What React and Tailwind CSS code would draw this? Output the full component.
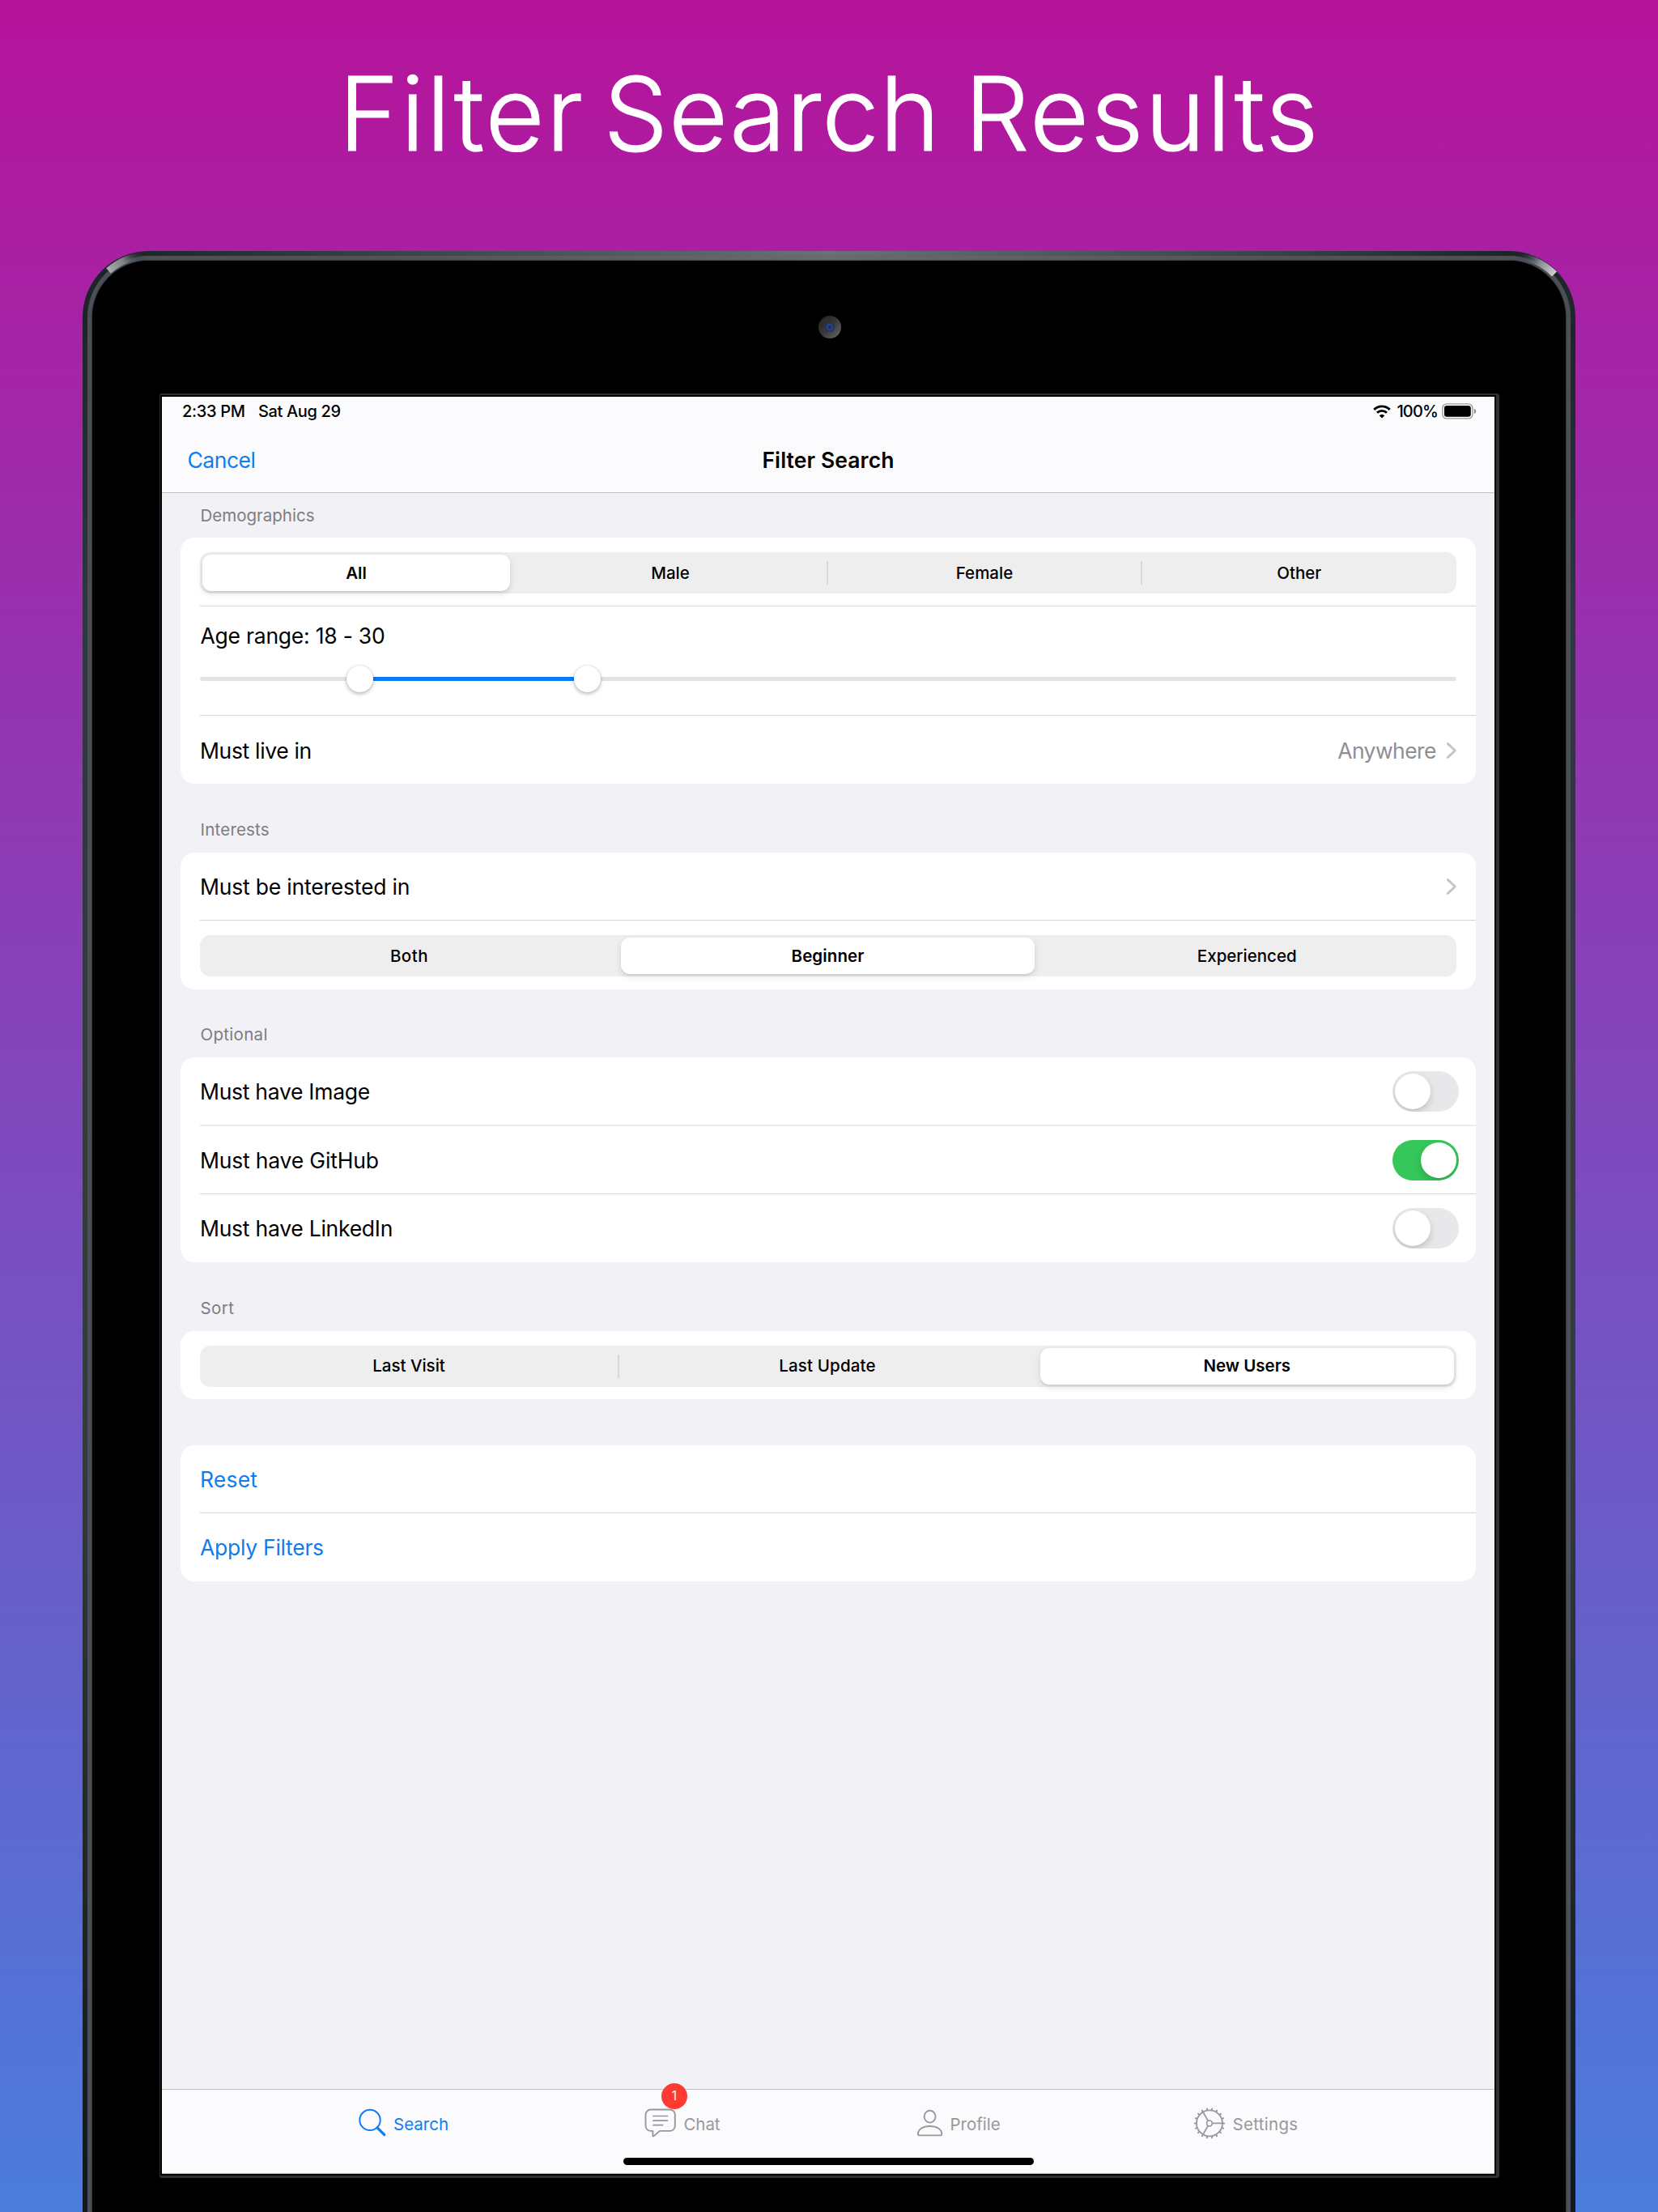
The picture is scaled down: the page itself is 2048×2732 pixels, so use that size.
import React from "react";

function Device({ children }) {
  return (
    <div className="relative ml-[102px] w-[1844px] h-[2560px] rounded-[82px] bg-[linear-gradient(to_right,#1b2328_0%,#20282c_5%,#3a4247_20%,#6b7175_50%,#3a4247_80%,#1b2328_96%,#1f272d_100%)] p-[6px]">
      <div className="absolute inset-x-0 bottom-0 top-[90px] bg-[linear-gradient(to_bottom,#1d252a,#30383d_15%,#353c41_55%,#121a1f_92%)]" />
      <div className="relative h-full rounded-[76px] bg-[linear-gradient(to_right,#4a5056_0%,#4e545a_20%,#656c72_50%,#4e545a_80%,#4a5056_100%)] p-[6px] shadow-[0_0_1px_0px_#3a4146]">
        <div className="h-full rounded-[70px] bg-black shadow-[0_0_2px_0px_#000000] pl-[83px] pt-[164px]">{children}</div>
      </div>
      <svg className="absolute left-0 top-0" width="1844" height="100" viewBox="0 0 1844 100" fill="none">
        <defs>
          <linearGradient id="glintL" gradientUnits="userSpaceOnUse" x1="32" y1="24" x2="76" y2="4">
            <stop offset="0" stopColor="#a9adb0" />
            <stop offset="0.45" stopColor="#7b8083" />
            <stop offset="1" stopColor="#20282c" stopOpacity="0" />
          </linearGradient>
          <linearGradient id="glintR" gradientUnits="userSpaceOnUse" x1="1819" y1="30" x2="1772" y2="4">
            <stop offset="0" stopColor="#d2d4d6" />
            <stop offset="0.45" stopColor="#868b8e" />
            <stop offset="1" stopColor="#20282c" stopOpacity="0" />
          </linearGradient>
        </defs>
        <path d="M32 24.5A76.5 76.5 0 0 1 80 5.5" stroke="url(#glintL)" strokeWidth="8.5" />
        <path d="M1818 28.5A76.5 76.5 0 0 0 1764 5.5" stroke="url(#glintR)" strokeWidth="8.5" />
      </svg>
      <div className="absolute left-[909px] top-[80px] size-[28px] rounded-full bg-[linear-gradient(135deg,#262626_10%,#383838_50%,#666666_95%)] p-[8px]">
        <div className="size-[12px] rounded-full bg-[radial-gradient(circle,#16264f_0%,#2a4587_40%,#1b2440_75%,#2a2b30_100%)]" />
      </div>
    </div>
  );
}

function Wifi() {
  return (
    <svg width="22" height="17" viewBox="0 0 22 17" fill="none" stroke="#000" strokeWidth="2.9">
      <path d="M1.3 5.9A13.8 13.8 0 0 1 20.7 5.9" />
      <path d="M5 9.8A8.6 8.6 0 0 1 17 9.8" />
      <path d="M11 16.6L7.7 13.2A4.8 4.8 0 0 1 14.3 13.2Z" fill="#000" stroke="none" />
    </svg>
  );
}

function Battery() {
  return (
    <svg width="43" height="20" viewBox="0 0 43 20">
      <rect x="0.9" y="0.9" width="37" height="18" rx="5" fill="none" stroke="#9c9c9f" strokeWidth="1.4" />
      <rect x="3" y="3" width="32.8" height="13.8" rx="3.2" fill="#000" />
      <path d="M39.8 6.7c1.6.5 2.4 1.7 2.4 3.2s-.8 2.7-2.4 3.2z" fill="#8e8e92" />
    </svg>
  );
}

function SectionTitle({ children, className = "" }) {
  return (
    <div className={"h-[55px] pl-[47.5px] text-[20.5px] leading-[55px] text-[#7d7d82] " + className}>{children}</div>
  );
}

function Card({ children, className = "" }) {
  return <div className={"mx-[23px] rounded-[17px] bg-white pl-[24px] " + className}>{children}</div>;
}

function Row({ children, className }) {
  return <div className={"flex items-center border-[#d6d6d8] text-[26.5px] leading-8 " + className}>{children}</div>;
}

function Segmented({ items, selected, columns }) {
  return (
    <div className={"mr-[24.5px] grid h-[51px] flex-1 rounded-[13px] bg-[#eeeeee] p-[3px] text-[20.5px] font-medium " + columns}>
      {items.map((item, i) => {
        const on = i === selected;
        const divided = i > 0 && !on && i - 1 !== selected;
        return (
          <div
            key={item.label}
            className={
              "relative flex items-center justify-center " +
              (on ? "rounded-[11px] bg-white font-semibold shadow-[0_3px_8px_rgba(0,0,0,0.12),0_2px_2px_rgba(0,0,0,0.05)] " : "") +
              (item.className || "")
            }
          >
            {divided && <span className="absolute left-[-1px] top-[8px] h-[29px] w-[1.5px] bg-[#d8d8da]" />}
            {item.label}
          </div>
        );
      })}
    </div>
  );
}

function Chevron() {
  return (
    <svg className="mr-[23px]" width="14" height="22" viewBox="0 0 14 22" fill="none" stroke="#c4c4c7" strokeWidth="2.9" strokeLinecap="round" strokeLinejoin="round">
      <path d="M2.4 2.6L11.4 11L2.4 19.4" />
    </svg>
  );
}

function Toggle({ on }) {
  return (
    <div className={"mr-[21px] flex h-[50px] w-[82px] overflow-hidden rounded-full p-[3px] " + (on ? "justify-end bg-[#35c759]" : "bg-[#e8e8ea]")}>
      <div className="size-[44px] rounded-full bg-white shadow-[0_4px_10px_rgba(0,0,0,0.16),0_1px_1px_rgba(0,0,0,0.06)]" />
    </div>
  );
}

function Slider() {
  return (
    <div className="mr-[24.5px] flex h-[34px] items-center">
      <div className="h-[5px] w-[181px] rounded-l-full bg-[#e3e3e3]" />
      <div className="relative z-10 size-[33px] rounded-full bg-white shadow-[0_2px_5px_rgba(0,0,0,0.28),0_0_1px_rgba(0,0,0,0.25)]" />
      <div className="h-[5px] w-[248px] bg-[#0a7bf6]" />
      <div className="relative z-10 size-[33px] rounded-full bg-white shadow-[0_2px_5px_rgba(0,0,0,0.28),0_0_1px_rgba(0,0,0,0.25)]" />
      <div className="h-[5px] flex-1 rounded-r-full bg-[#e3e3e3]" />
    </div>
  );
}

function SearchIcon() {
  return (
    <svg width="36" height="40" viewBox="0 0 36 40" fill="none" stroke="currentColor">
      <circle cx="14" cy="16.4" r="12.7" strokeWidth="2" />
      <path d="M23 25.8L31.8 34.6" strokeWidth="3.2" strokeLinecap="round" />
    </svg>
  );
}

function ChatIcon() {
  return (
    <svg width="40" height="40" viewBox="0 0 40 40" fill="none" stroke="currentColor" strokeWidth="1.9" strokeLinejoin="round" strokeLinecap="round">
      <path d="M7.8 3.5H31.5A6.3 6.3 0 0 1 37.8 9.8V23.6A6.3 6.3 0 0 1 31.5 29.9H18.8L12.4 35.6Q10.4 37.4 10.4 35.6V29.9H7.8A6.3 6.3 0 0 1 1.5 23.6V9.8A6.3 6.3 0 0 1 7.8 3.5Z" />
      <path d="M10.9 11.5H28.5M10.9 17.2H28.5M10.9 22.7H22.5" strokeWidth="1.7" />
    </svg>
  );
}

function ProfileIcon() {
  return (
    <svg width="34" height="40" viewBox="0 0 34 40" fill="none" stroke="currentColor" strokeWidth="1.9">
      <ellipse cx="16.6" cy="12.2" rx="6.9" ry="7.4" />
      <path d="M1.9 33.2C2.4 27.6 8.2 24 16.6 24S30.8 27.6 31.3 33.2Q31.4 35.4 29.4 35.4H3.8Q1.8 35.4 1.9 33.2Z" />
    </svg>
  );
}

function GearIcon() {
  const teeth = Array.from({ length: 18 }, (_, i) => i * 20);
  return (
    <svg width="40" height="40" viewBox="0 0 40 40" fill="none" stroke="currentColor">
      <circle cx="20" cy="20.4" r="16" strokeWidth="1.8" />
      <circle cx="20" cy="20.4" r="3.4" strokeWidth="1.7" />
      {teeth.map((a) => (
        <path key={a} d="M36.6 20.4H38.2" strokeWidth="2" strokeLinecap="round" transform={"rotate(" + a + " 20 20.4)"} />
      ))}
      {[0, 120, 240].map((a) => (
        <path key={a} d="M23.4 20.4H36" strokeWidth="1.7" transform={"rotate(" + a + " 20 20.4)"} />
      ))}
    </svg>
  );
}

function Tab({ icon, label, className = "", labelClass, badge }) {
  return (
    <div className={"relative flex h-[41px] text-[20.5px] " + className}>
      {icon}
      <span className={"pt-[2px] leading-[40px] " + labelClass}>{label}</span>
      {badge && (
        <span className="absolute left-[21px] top-[-29px] flex size-[32px] items-center justify-center rounded-full bg-[#ff3a30] text-[15.5px] leading-none text-white">
          {badge}
        </span>
      )}
    </div>
  );
}

export default function App() {
  return (
    <div className="h-[2732px] w-[2048px] overflow-hidden bg-[linear-gradient(to_bottom,#b6139b,#4a7cdc)] font-['Inter','Liberation_Sans',sans-serif] text-black">
      <h1 className="flex h-[310px] pl-[418.5px] pt-[60px] text-[126px] font-light leading-[160px] text-white [-webkit-text-stroke:1.2px_white]">
        <span className="w-[327px] tracking-[2.3px]">Filter</span>
        <span className="w-[446px] tracking-[0.9px]">Search</span>
        <span className="tracking-[2.2px]">Results</span>
      </h1>

      <Device>
        <div className="w-[1655px] rounded-[3px] border-b-[3px] border-l border-r-4 border-t-2 border-[#303031] bg-black p-[2px] pb-[2px]">
          <div className="flex h-[2195px] w-[1646px] flex-col bg-[#f2f1f6]">
            <header className="h-[119px] border-b border-[#bfbfc2] bg-[#fbfbfd]">
              <div className="flex h-[36px] items-center pl-[25px] pr-[22px] text-[20px] font-medium">
                <span className="w-[94px] tracking-[-0.3px]">2:33 PM</span>
                <span className="tracking-[-0.35px]">Sat Aug 29</span>
                <span className="ml-auto mr-[7px]"><Wifi /></span>
                <span className="mr-[5px] tracking-[-0.85px]">100%</span>
                <Battery />
              </div>
              <div className="grid h-[83px] grid-cols-3 items-center px-[31.5px] text-[26.5px] leading-8">
                <span className="tracking-[-0.5px] text-[#0f7cf3]">Cancel</span>
                <span className="text-center font-semibold tracking-[0.1px]">Filter Search</span>
              </div>
            </header>

            <SectionTitle>Demographics</SectionTitle>
            <Card>
              <Row className="h-[85px] border-b pt-[3px]">
                <Segmented
                  columns="grid-cols-[380px_392px_388px_1fr]"
                  selected={0}
                  items={[{ label: "All" }, { label: "Male", className: "pl-[4px]" }, { label: "Female" }, { label: "Other", className: "pl-[4px]" }]}
                />
              </Row>
              <div className="h-[135px] border-b border-[#d6d6d8] pt-[20px]">
                <div className="h-[52px] pl-[0.5px] text-[26.5px] leading-8 tracking-[-0.23px]">Age range: 18 - 30</div>
                <Slider />
              </div>
              <Row className="h-[84px] pt-px">
                <span className="tracking-[-0.33px]">Must live in</span>
                <span className="ml-auto mr-[12px] tracking-[-0.55px] text-[#8e8e92]">Anywhere</span>
                <Chevron />
              </Row>
            </Card>

            <SectionTitle className="mt-[29px] mb-px tracking-[0.2px]">Interests</SectionTitle>
            <Card>
              <Row className="h-[84px] justify-between border-b pt-px">
                <span className="tracking-[-0.2px]">Must be interested in</span>
                <Chevron />
              </Row>
              <Row className="h-[85px] pt-[2px]">
                <Segmented
                  columns="grid-cols-[517px_511px_1fr]"
                  selected={1}
                  items={[{ label: "Both", className: "pr-[6px] tracking-[0.5px]" }, { label: "Beginner", className: "tracking-[0.1px]" }, { label: "Experienced", className: "pl-[7px]" }]}
                />
              </Row>
            </Card>

            <SectionTitle className="mt-[28px] mb-px tracking-[0.3px]">Optional</SectionTitle>
            <Card>
              <Row className="h-[85px] justify-between border-b-2 !border-[#ebebed] pt-px">
                <span className="tracking-[-0.28px]">Must have Image</span>
                <Toggle />
              </Row>
              <Row className="h-[84px] justify-between border-b">
                <span className="tracking-[-0.18px]">Must have GitHub</span>
                <Toggle on />
              </Row>
              <Row className="h-[84px] justify-between">
                <span className="tracking-[-0.25px]">Must have LinkedIn</span>
                <Toggle />
              </Row>
            </Card>

            <SectionTitle className="mt-[29px] mb-px tracking-[0.4px]">Sort</SectionTitle>
            <Card>
              <Row className="h-[84px] pt-[2px]">
                <Segmented
                  columns="grid-cols-[514px_521px_1fr]"
                  selected={2}
                  items={[{ label: "Last Visit", className: "pr-[4px]" }, { label: "Last Update", className: "pr-[5px] tracking-[0.15px]" }, { label: "New Users" }]}
                />
              </Row>
            </Card>

            <Card className="mt-[57px] text-[#0f7cf0]">
              <Row className="h-[84px] border-b"><span className="tracking-[0.2px]">Reset</span></Row>
              <Row className="h-[84px]"><span className="tracking-[-0.27px]">Apply Filters</span></Row>
            </Card>

            <footer className="mt-auto flex h-[105px] flex-col items-center border-b border-t border-b-[#b5b5b8] border-t-[#bfbfc4] bg-[#fbfbfd]">
              <nav className="grid w-full grid-cols-[353px_336px_342px_1fr] pl-[243px] pt-[21px] text-[#98989b]">
                <Tab icon={<SearchIcon />} label="Search" className="text-[#0f7cf3]" labelClass="pl-[7px]" />
                <Tab icon={<ChatIcon />} label="Chat" labelClass="pl-[8.5px] tracking-[-0.1px]" badge="1" />
                <Tab icon={<ProfileIcon />} label="Profile" labelClass="pl-[7.5px]" />
                <Tab icon={<GearIcon />} label="Settings" labelClass="pl-[8.5px] tracking-[0.3px]" />
              </nav>
              <div className="mt-[22px] h-[9px] w-[507px] rounded-full bg-black" />
            </footer>
          </div>
        </div>
      </Device>
    </div>
  );
}
